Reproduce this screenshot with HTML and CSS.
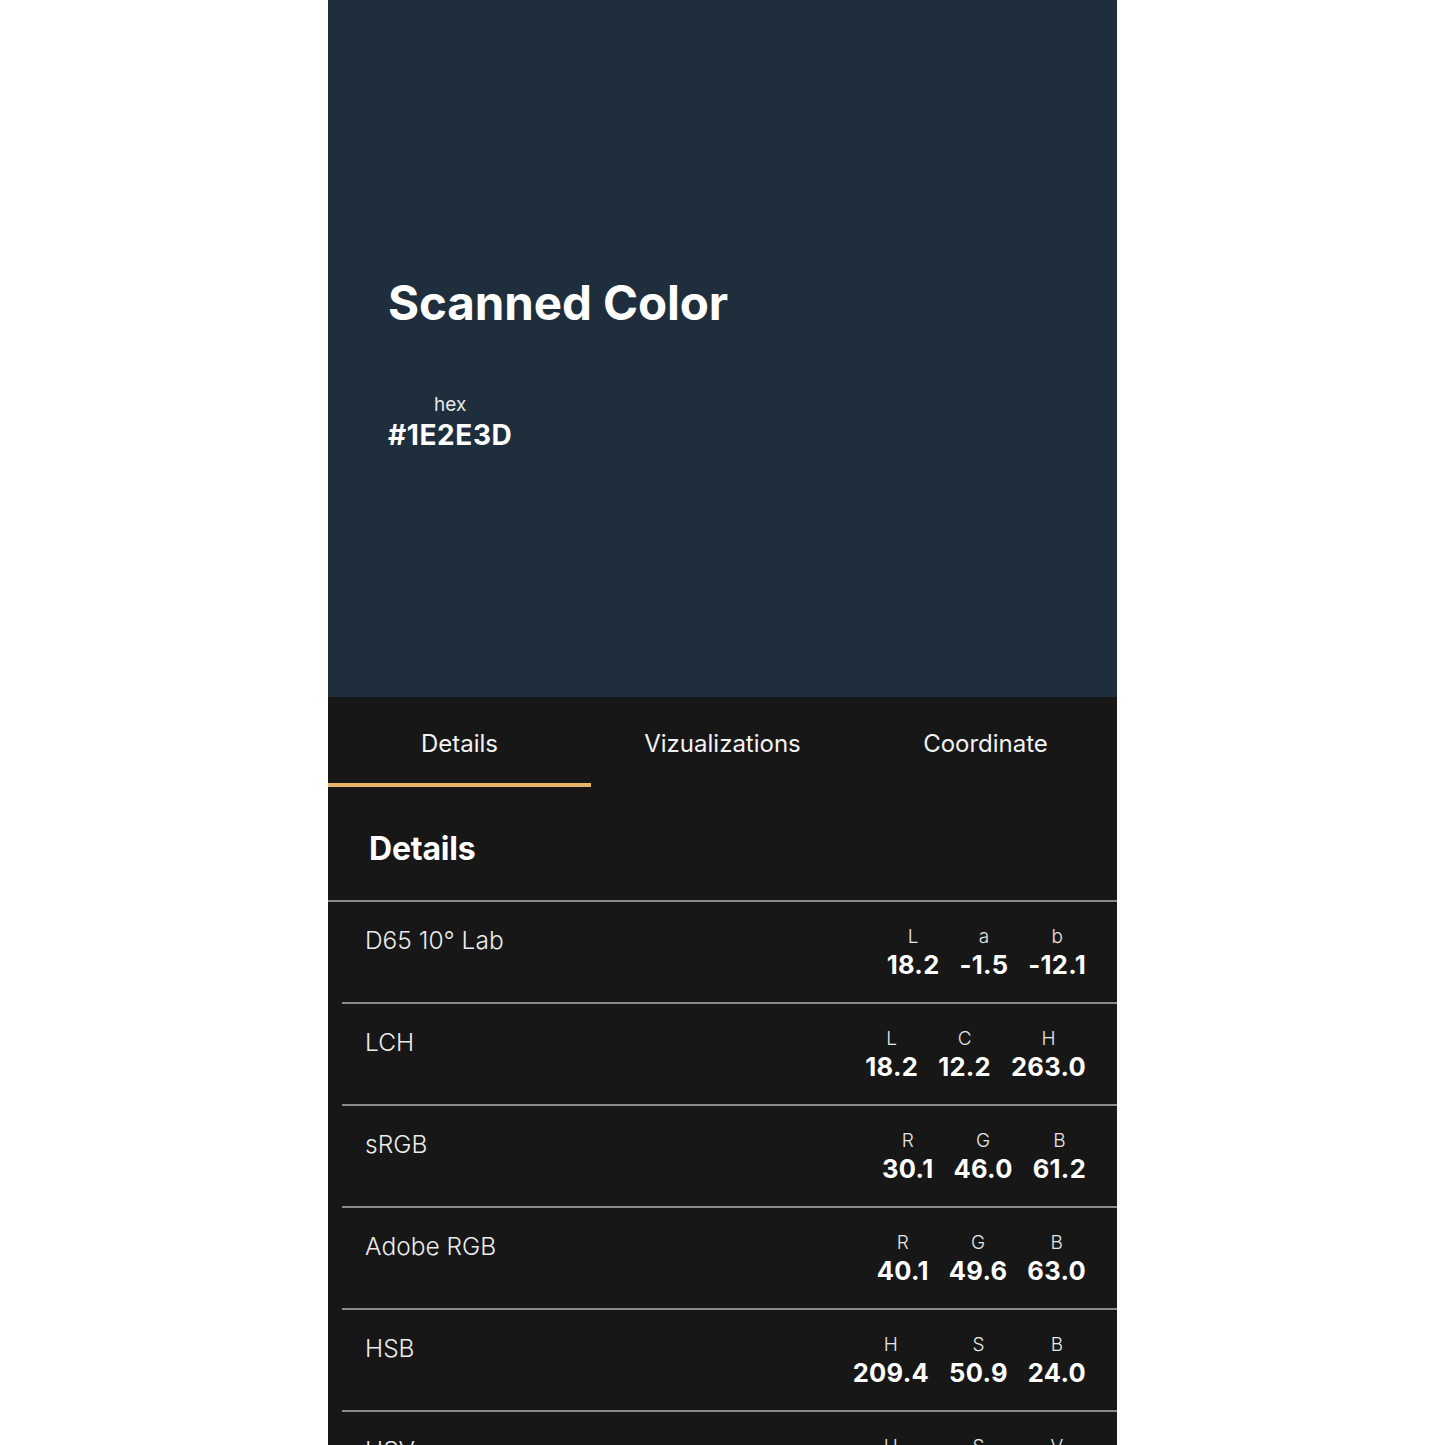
FILE: index.html
```html
<!DOCTYPE html>
<html lang="en">
<head>
    <meta charset="UTF-8">
    <meta name="viewport" content="width=device-width, initial-scale=1.0">
    <title>Scanned Color</title>
    <link rel="stylesheet" href="styles.css">
</head>
<body>
    <div class="screen">
        <div class="swatch">
            <h1>Scanned Color</h1>
            <div class="hex">
                <span class="hex-label">hex</span>
                <span class="hex-value">#1E2E3D</span>
            </div>
        </div>
        <div class="panel">
            <div class="tabs">
                <div class="tab active">Details</div>
                <div class="tab">Vizualizations</div>
                <div class="tab">Coordinate</div>
            </div>
            <h2>Details</h2>
            <div class="rows">
                <div class="row">
                    <div class="row-name">D65 10° Lab</div>
                    <div class="values">
                        <div class="val"><span>L</span><b>18.2</b></div>
                        <div class="val"><span>a</span><b>-1.5</b></div>
                        <div class="val"><span>b</span><b>-12.1</b></div>
                    </div>
                </div>
                <div class="row">
                    <div class="row-name">LCH</div>
                    <div class="values">
                        <div class="val"><span>L</span><b>18.2</b></div>
                        <div class="val"><span>C</span><b>12.2</b></div>
                        <div class="val"><span>H</span><b>263.0</b></div>
                    </div>
                </div>
                <div class="row">
                    <div class="row-name">sRGB</div>
                    <div class="values">
                        <div class="val"><span>R</span><b>30.1</b></div>
                        <div class="val"><span>G</span><b>46.0</b></div>
                        <div class="val"><span>B</span><b>61.2</b></div>
                    </div>
                </div>
                <div class="row">
                    <div class="row-name">Adobe RGB</div>
                    <div class="values">
                        <div class="val"><span>R</span><b>40.1</b></div>
                        <div class="val"><span>G</span><b>49.6</b></div>
                        <div class="val"><span>B</span><b>63.0</b></div>
                    </div>
                </div>
                <div class="row">
                    <div class="row-name">HSB</div>
                    <div class="values">
                        <div class="val"><span>H</span><b>209.4</b></div>
                        <div class="val"><span>S</span><b>50.9</b></div>
                        <div class="val"><span>B</span><b>24.0</b></div>
                    </div>
                </div>
                <div class="row">
                    <div class="row-name">HSV</div>
                    <div class="values">
                        <div class="val"><span>H</span><b>209.4</b></div>
                        <div class="val"><span>S</span><b>50.9</b></div>
                        <div class="val"><span>V</span><b>24.0</b></div>
                    </div>
                </div>
            </div>
        </div>
    </div>
</body>
</html>
```

FILE: styles.css
```css
html, body {
    margin: 0;
    height: 1445px;
    overflow: hidden;
}

body {
    background: #ffffff;
    font-family: Inter, 'Noto Sans', sans-serif;
    color: #ffffff;
}

.screen {
    width: 789px;
    margin: 0 auto;
    height: 1445px;
    overflow: hidden;
    background-color: #171717;
}

.swatch {
    background-color: #1f2e3d;
    height: 697px;
    box-sizing: border-box;
    padding: 274px 0 0 60px;
}

.swatch h1 {
    margin: 0;
    font-size: 47.5px;
    line-height: 58px;
    font-weight: 700;
    letter-spacing: -0.1px;
}

.hex {
    display: inline-flex;
    flex-direction: column;
    align-items: center;
    margin-top: 61px;
}

.hex-label {
    font-size: 19px;
    line-height: 24px;
    font-weight: 400;
    color: #e6e9ec;
}

.hex-value {
    margin-top: 2px;
    font-size: 28px;
    line-height: 32px;
    font-weight: 700;
    letter-spacing: 0.6px;
}

.tabs {
    display: flex;
}

.tab {
    flex: 1;
    height: 90px;
    box-sizing: border-box;
    display: flex;
    align-items: center;
    justify-content: center;
    padding-top: 6px;
    font-size: 24px;
    font-weight: 400;
    color: #f2f2f2;
    border-bottom: 4px solid transparent;
}

.tab.active {
    border-bottom-color: #e6b567;
}

.panel h2 {
    margin: 0;
    height: 113px;
    display: flex;
    align-items: center;
    padding-left: 41px;
    padding-top: 9px;
    box-sizing: border-box;
    font-size: 32px;
    font-weight: 700;
    letter-spacing: -0.2px;
}

.rows {
    border-top: 2px solid #8c8c8c;
}

.row {
    display: flex;
    justify-content: space-between;
    margin-left: 14px;
    height: 102px;
    box-sizing: border-box;
    padding: 24px 31px 0 23px;
    border-bottom: 2px solid #8c8c8c;
}

.row-name {
    font-size: 24.5px;
    line-height: 28px;
    font-weight: 300;
    color: #ececec;
}

.values {
    display: flex;
    gap: 20px;
}

.val {
    display: flex;
    flex-direction: column;
    align-items: center;
}

.val span {
    font-size: 19px;
    line-height: 22px;
    font-weight: 300;
    color: #e6e6e6;
}

.val b {
    margin-top: 2px;
    font-size: 25.5px;
    line-height: 30px;
    font-weight: 700;
    letter-spacing: 0.3px;
}
```
